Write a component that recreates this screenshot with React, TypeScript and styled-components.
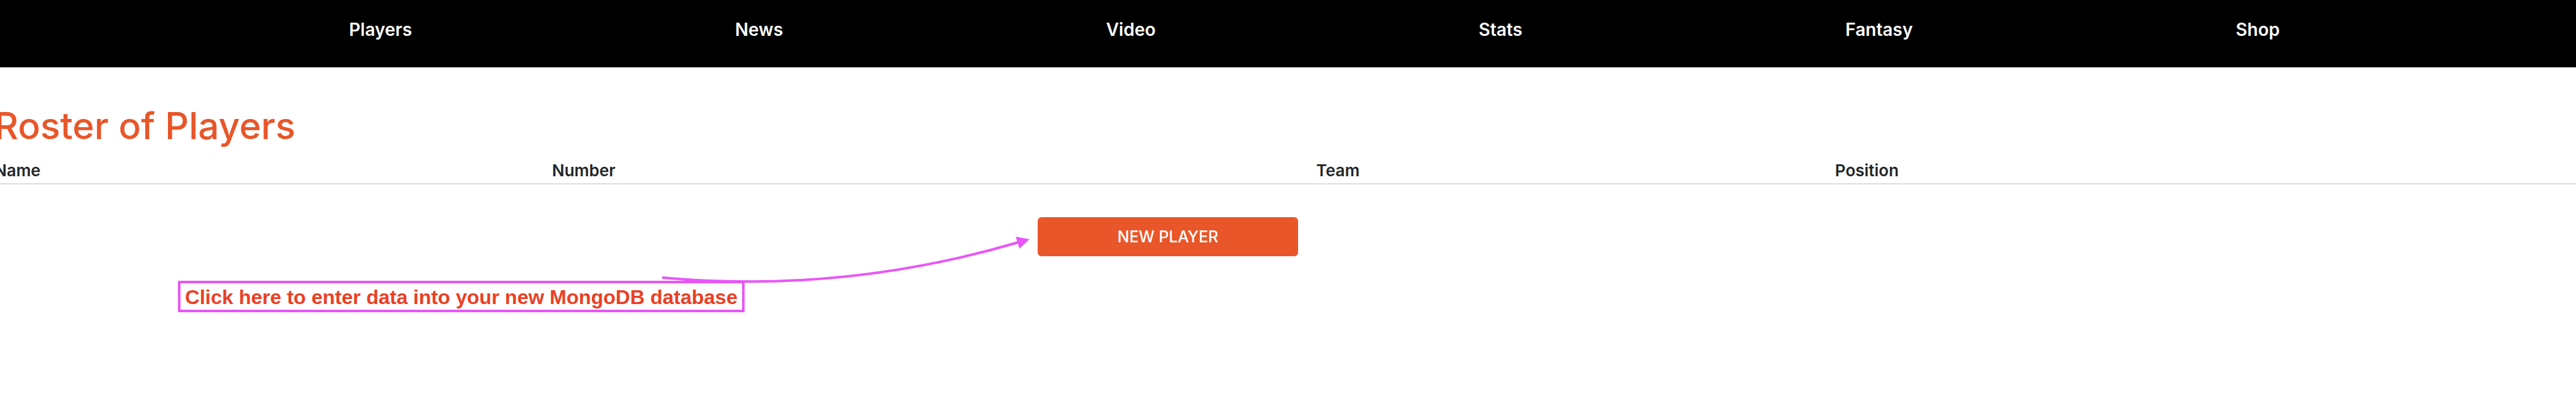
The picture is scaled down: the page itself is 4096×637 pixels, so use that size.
import React from "react";
import styled, { createGlobalStyle } from "styled-components";

const GlobalStyle = createGlobalStyle`
  *, *::before, *::after { box-sizing: border-box; }
  body {
    margin: 0;
    background: #fff;
    color: #212529;
    font-family: Inter, "Liberation Sans", sans-serif;
    overflow-x: hidden;
  }
`;

const Page = styled.div`
  position: relative;
  overflow: hidden;
  min-height: 100vh;
`;

const NavBar = styled.nav`
  background: #000;
  padding: 23px 471px 36px 555px;
`;

const NavList = styled.ul`
  display: flex;
  justify-content: space-between;
  list-style: none;
  margin: 0;
  padding: 0;
`;

const NavLink = styled.a`
  display: block;
  color: #fff;
  font-size: 28px;
  line-height: 48px;
  font-weight: 600;
  text-decoration: none;
`;

const Main = styled.main`
  margin-left: -9px;
`;

const Title = styled.h1`
  margin: 0;
  padding-top: 53px;
  color: #e85629;
  font-size: 59px;
  line-height: 80px;
  font-weight: 500;
`;

const RosterTable = styled.table`
  width: 100%;
  table-layout: fixed;
  border-collapse: collapse;
`;

const HeadCell = styled.th<{ $width: string }>`
  width: ${(p) => p.$width};
  padding: 15px 0 4px;
  border-bottom: 2px solid #dedede;
  text-align: left;
  font-size: 26px;
  line-height: 32px;
  font-weight: 600;
`;

const Actions = styled.div`
  display: flex;
  padding: 52px 0 0 1659px;
`;

const NewButton = styled.button`
  width: 414px;
  height: 62px;
  border: 0;
  border-radius: 6px;
  background: #e85629;
  color: #fff;
  font-family: inherit;
  font-size: 25px;
  line-height: 32px;
  font-weight: 500;
  text-transform: uppercase;
`;

const Callout = styled.p`
  position: absolute;
  left: 283px;
  top: 446px;
  width: 901px;
  margin: 0;
  padding: 4px 0 2px;
  border: 4px solid #e955f8;
  color: #ea4025;
  font-family: "Liberation Sans", sans-serif;
  font-size: 32px;
  line-height: 36px;
  font-weight: 700;
  text-align: center;
  white-space: nowrap;
`;

const Arrow = styled.svg`
  position: absolute;
  left: 1040px;
  top: 360px;
  pointer-events: none;
`;

const links = ["Players", "News", "Video", "Stats", "Fantasy", "Shop"];

const columns = [
  { label: "Name", width: "21.6%" },
  { label: "Number", width: "29.6%" },
  { label: "Team", width: "20.1%" },
  { label: "Position", width: "28.7%" },
];

export default function App() {
  return (
    <Page>
      <GlobalStyle />
      <NavBar>
        <NavList>
          {links.map((l) => (
            <li key={l}>
              <NavLink href="#">{l}</NavLink>
            </li>
          ))}
        </NavList>
      </NavBar>
      <Main>
        <Title>Roster of Players</Title>
        <RosterTable>
          <thead>
            <tr>
              {columns.map((c) => (
                <HeadCell key={c.label} scope="col" $width={c.width}>
                  {c.label}
                </HeadCell>
              ))}
            </tr>
          </thead>
        </RosterTable>
        <Actions>
          <NewButton type="button">New Player</NewButton>
        </Actions>
      </Main>
      <Callout>Click here to enter data into your new MongoDB database</Callout>
      <Arrow width="610" height="110" viewBox="0 0 610 110" aria-hidden="true">
        <path d="M13 81 Q300 107 579 25" fill="none" stroke="#e955f8" strokeWidth="4" />
        <path d="M597 20 L575 16 L581 35 Z" fill="#e955f8" />
      </Arrow>
    </Page>
  );
}
